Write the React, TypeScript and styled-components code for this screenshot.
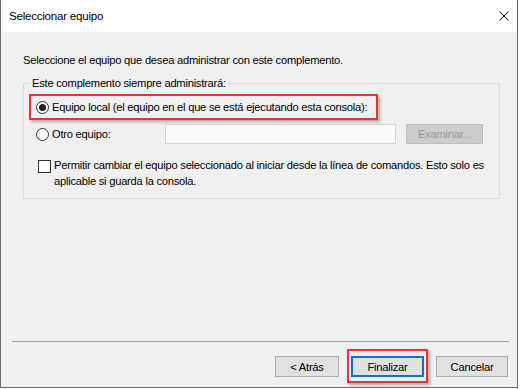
import React from "react";
import styled, { createGlobalStyle } from "styled-components";

const GlobalStyle = createGlobalStyle`
  html, body {
    margin: 0;
    background: #ffffff;
  }
  body {
    font-family: "Segoe UI", "Liberation Sans", Arial, sans-serif;
    font-size: 11.2px;
    letter-spacing: -0.25px;
    color: #000;
  }
`;

const Window = styled.div`
  width: 518px;
  height: 388px;
  box-sizing: border-box;
  border: 1px solid #6e6e6e;
  border-top: none;
  display: flex;
  flex-direction: column;
  background: #f0f0f0;
`;

const TitleBar = styled.div`
  height: 32px;
  flex: none;
  background: #ffffff;
  display: flex;
  align-items: center;
  justify-content: space-between;
  padding: 0 8px;
`;

const Title = styled.span`
  font-size: 11.6px;
  line-height: 16px;
`;

const Body = styled.div`
  flex: 1;
  display: flex;
  flex-direction: column;
  padding: 20px 0 0 22px;
`;

const Intro = styled.div`
  line-height: 16px;
`;

const Group = styled.fieldset`
  margin: 7px 0 0 0;
  padding: 0;
  width: 477px;
  min-width: 0;
  box-sizing: border-box;
  border: 1px solid #dcdcdc;
`;

const Legend = styled.legend`
  margin-left: 6px;
  padding: 0 2px;
  line-height: 16px;
`;

const GroupBody = styled.div`
  display: flex;
  flex-direction: column;
  padding: 3px 0 9px 0;
`;

const Highlight = styled.div`
  border: 2px solid #e5323b;
  box-shadow: 2px 2px 3px rgba(0, 0, 0, 0.3);
  box-sizing: border-box;
`;

const RadioHighlight = styled(Highlight)`
  margin-left: 5px;
  width: 349px;
  height: 26px;
  display: flex;
  align-items: center;
  padding: 0 5px;
`;

const Row = styled.div<{ $top?: number }>`
  display: flex;
  align-items: center;
  height: 20px;
  margin-top: ${(p) => p.$top ?? 0}px;
  padding-left: 12px;
`;

const Radio = styled.span<{ $checked?: boolean }>`
  position: relative;
  width: 13px;
  height: 13px;
  box-sizing: border-box;
  border: 1px solid #333333;
  border-radius: 50%;
  background: #ffffff;
  flex: none;
  margin-right: 3px;
  &::after {
    content: "";
    display: ${(p) => (p.$checked ? "block" : "none")};
    position: absolute;
    left: 2px;
    top: 2px;
    width: 7px;
    height: 7px;
    border-radius: 50%;
    background: #222222;
  }
`;

const Label = styled.span<{ $width?: number }>`
  line-height: 16px;
  white-space: nowrap;
  ${(p) => (p.$width ? `width: ${p.$width}px;` : "")}
`;

const TextInput = styled.div`
  width: 231px;
  height: 20px;
  box-sizing: border-box;
  border: 1px solid #d5d5d5;
  background: #f9f9f9;
`;

const Button = styled.button<{ $width: number; $default?: boolean }>`
  width: ${(p) => p.$width}px;
  height: 21px;
  box-sizing: border-box;
  padding: 0;
  margin: 0;
  font-family: inherit;
  font-size: 11.2px;
  letter-spacing: -0.25px;
  color: #000;
  background: #e1e1e1;
  border: ${(p) => (p.$default ? "2px solid #0a72d4" : "1px solid #adadad")};
  border-radius: 0;
  &:disabled {
    background: #cccccc;
    border-color: #bfbfbf;
    color: #9a9a9a;
  }
`;

const BrowseButton = styled(Button)`
  margin-left: 10px;
  height: 20px;
`;

const CheckRow = styled.div`
  display: flex;
  align-items: flex-start;
  margin-top: 13px;
  padding-left: 14px;
`;

const CheckBox = styled.span`
  width: 13px;
  height: 13px;
  box-sizing: border-box;
  border: 1px solid #333333;
  background: #ffffff;
  flex: none;
  margin: 3px 3px 0 0;
`;

const CheckText = styled.span`
  line-height: 16px;
  white-space: nowrap;
`;

const Footer = styled.div`
  flex: none;
  display: flex;
  flex-direction: column;
`;

const Separator = styled.div`
  height: 1px;
  margin: 0 8px 0 11px;
  background: #a0a0a0;
`;

const ButtonBar = styled.div`
  display: flex;
  align-items: flex-start;
  justify-content: flex-end;
  gap: 12px;
  padding: 14px 9px 10px 0;
`;

const ButtonHighlight = styled(Highlight)`
  padding: 5px 2px 4px 2px;
  margin: -7px -4px -6px -4px;
  display: flex;
`;

const CloseIcon = () => (
  <svg width="10" height="10" viewBox="0 0 10 10">
    <path d="M0.5 0.5 L9.5 9.5 M9.5 0.5 L0.5 9.5" stroke="#000" strokeWidth="1" fill="none" />
  </svg>
);

export default function App() {
  return (
    <>
      <GlobalStyle />
      <Window>
        <TitleBar>
          <Title>Seleccionar equipo</Title>
          <CloseIcon />
        </TitleBar>
        <Body>
          <Intro>Seleccione el equipo que desea administrar con este complemento.</Intro>
          <Group>
            <Legend>Este complemento siempre administrará:</Legend>
            <GroupBody>
              <RadioHighlight>
                <Radio $checked />
                <Label>Equipo local (el equipo en el que se está ejecutando esta consola):</Label>
              </RadioHighlight>
              <Row $top={4}>
                <Radio />
                <Label $width={113}>Otro equipo:</Label>
                <TextInput />
                <BrowseButton $width={77} disabled>
                  Examinar...
                </BrowseButton>
              </Row>
              <CheckRow>
                <CheckBox />
                <CheckText>
                  Permitir cambiar el equipo seleccionado al iniciar desde la línea de comandos. Esto solo es
                  <br />
                  aplicable si guarda la consola.
                </CheckText>
              </CheckRow>
            </GroupBody>
          </Group>
        </Body>
        <Footer>
          <Separator />
          <ButtonBar>
            <Button $width={64}>&lt; Atrás</Button>
            <ButtonHighlight>
              <Button $width={73} $default>
                Finalizar
              </Button>
            </ButtonHighlight>
            <Button $width={72}>Cancelar</Button>
          </ButtonBar>
        </Footer>
      </Window>
    </>
  );
}
